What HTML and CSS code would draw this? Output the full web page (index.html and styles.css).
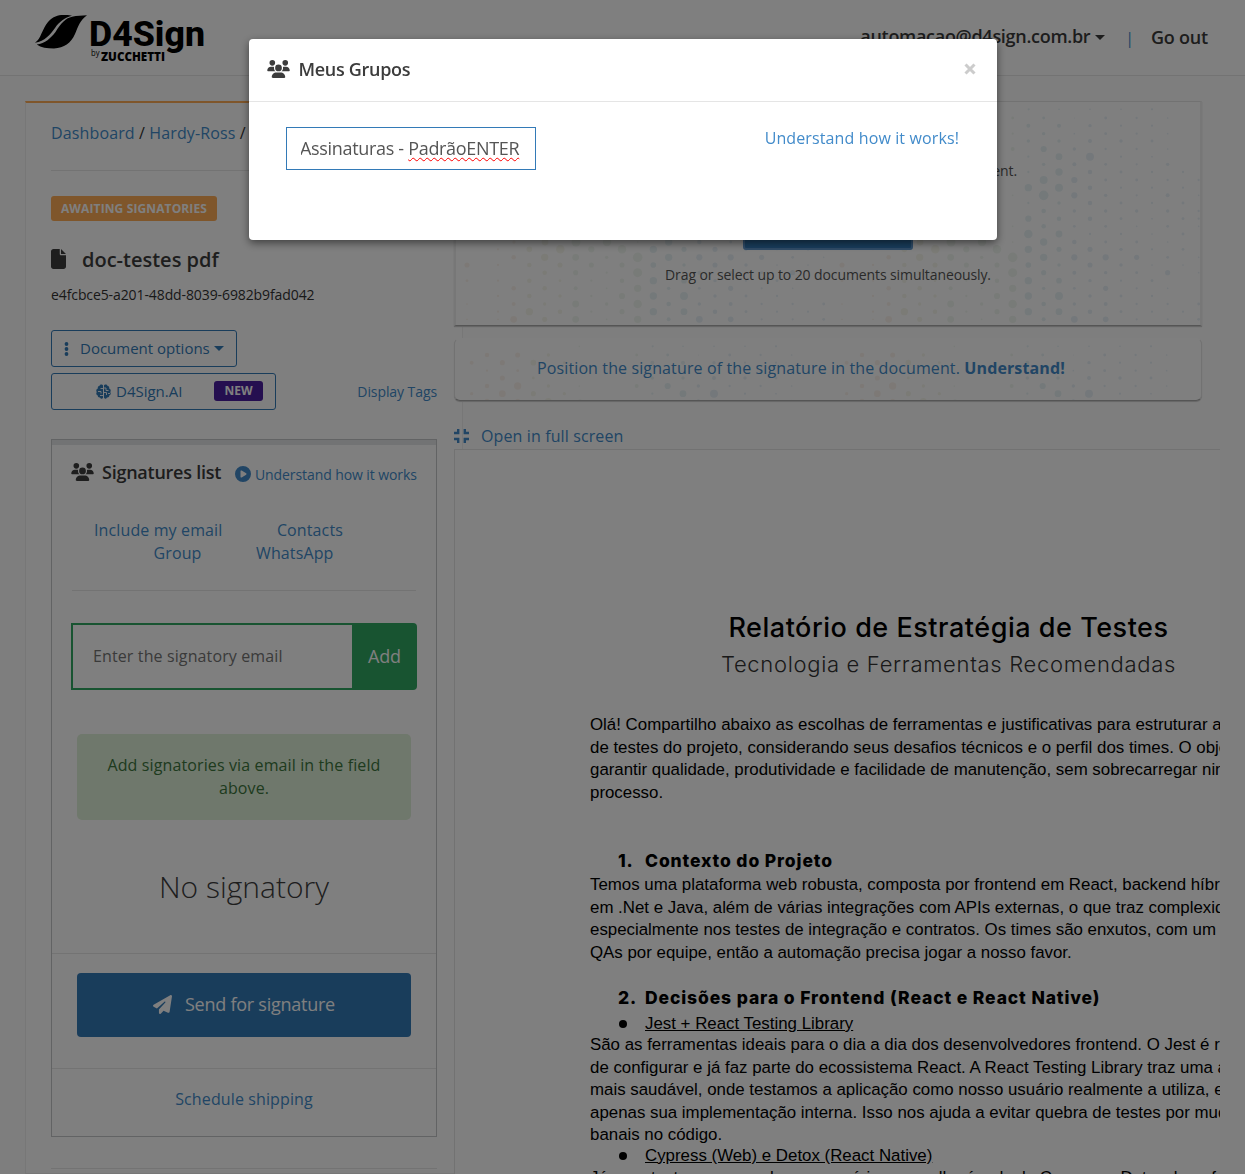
FILE: index.html
```html
<!DOCTYPE html>
<html lang="en">
<head>
<meta charset="utf-8">
<title>D4Sign</title>
<link rel="stylesheet" href="styles.css">
</head>
<body>
<svg class="defs" width="0" height="0">
  <symbol id="users" viewBox="0 0 640 512"><path d="M144 0a80 80 0 1 1 0 160A80 80 0 1 1 144 0zM512 0a80 80 0 1 1 0 160A80 80 0 1 1 512 0zM0 298.700C0 239.800 47.800 192 106.700 192h42.700c15.900 0 31 3.500 44.600 9.700c-1.300 7.200-1.900 14.700-1.900 22.300c0 38.200 16.800 72.500 43.300 96H21.300C9.600 320 0 310.400 0 298.700zM405.300 320c26.600-23.500 43.300-57.800 43.300-96c0-7.600-.7-15-1.900-22.300c13.600-6.300 28.700-9.700 44.600-9.700h42.700C592.200 192 640 239.800 640 298.700c0 11.800-9.600 21.300-21.300 21.300H405.300zM224 224a96 96 0 1 1 192 0 96 96 0 1 1 -192 0zM128 485.300C128 411.700 187.700 352 261.300 352H378.700C452.300 352 512 411.700 512 485.300c0 14.700-11.900 26.700-26.700 26.700H154.700c-14.700 0-26.700-11.900-26.700-26.700z"/></symbol>
</svg>

<header class="topbar">
  <svg class="logo" width="175" height="52" viewBox="0 0 175 52">
    <path d="M0 28.800C6 25 7 15 13 8C18 2.500 23 1 28 1C32 .8 35 1 37 1.700C30 3.500 24 8 20 14C15 21 10 27 0 28.800z"/>
    <path d="M1.700 30.500C10 29.500 16 24 20.500 18C26 9 31 4 37 2.800C42 1.500 47 1.500 52 1.200C45 6 43 13 40 20C36 29 29 34 19 34.500C12 34.500 6 33.500 1.700 30.500z"/>
    <text class="logo-name" x="54" y="31.500" textLength="116" lengthAdjust="spacingAndGlyphs">D4Sign</text>
    <text class="logo-by" x="56" y="42" textLength="8.500" lengthAdjust="spacingAndGlyphs">by</text>
    <text class="logo-sub" x="66" y="46.500" textLength="64" lengthAdjust="spacingAndGlyphs">ZUCCHETTI</text>
  </svg>
  <nav class="account">
    <span class="user">automacao@d4sign.com.br</span><span class="caret"></span>
    <span class="sep">|</span>
    <span class="out">Go out</span>
  </nav>
</header>

<div class="layout">
  <section class="side">
    <div class="crumbs"><a>Dashboard</a> / <a>Hardy-Ross</a> /</div>
    <div class="status">AWAITING SIGNATORIES</div>
    <h1 class="doc-name">
      <svg width="15" height="20" viewBox="0 0 384 512"><path d="M0 64C0 28.700 28.700 0 64 0H224V128c0 17.700 14.300 32 32 32H384V448c0 35.300-28.700 64-64 64H64c-35.300 0-64-28.700-64-64V64zm384 64H256V0L384 128z"/></svg>
      <span>doc-testes pdf</span>
    </h1>
    <div class="hash">e4fcbce5-a201-48dd-8039-6982b9fad042</div>
    <div class="btn-outline options">
      <svg width="5" height="14" viewBox="0 0 5 14"><circle cx="2.500" cy="2" r="1.900"/><circle cx="2.500" cy="7" r="1.900"/><circle cx="2.500" cy="12" r="1.900"/></svg>
      <span class="options-label">Document options</span><span class="caret"></span>
    </div>
    <div class="ai-row">
      <div class="btn-outline ai">
        <svg width="15" height="15" viewBox="0 0 15 15"><path d="M7 1.500C6.500 0 3.900 0 3.600 1.800C2 2 1.400 3.500 2 4.600C.2 5 -.2 7 .8 8C-.2 9.400.3 11 1.700 11.400C1.600 13 2.800 13.800 4 13.500C4.800 15.200 6.800 15 7 13.500zM8 1.500C8.500 0 11.100 0 11.400 1.800C13 2 13.600 3.500 13 4.600C14.800 5 15.200 7 14.200 8C15.200 9.400 14.700 11 13.300 11.400C13.400 13 12.200 13.800 11 13.500C10.200 15.200 8.200 15 8 13.500z"/><path class="folds" d="M7 4.500H4.500M2 7.500H5V9.500M4 11.500H7M8 4H10V6.500H12.500M8 8.500H10.500V11M12 9.500H14"/></svg>
        <span class="ai-label">D4Sign.AI</span>
        <span class="new">NEW</span>
      </div>
      <a class="tags">Display Tags</a>
    </div>

    <div class="panel">
      <div class="panel-head">
        <svg width="23" height="18"><use href="#users"/></svg>
        <span class="panel-title">Signatures list</span>
        <svg class="link-icon" width="16" height="16" viewBox="0 0 512 512"><path d="M0 256a256 256 0 1 1 512 0A256 256 0 1 1 0 256zM188.300 147.100c-7.600 4.200-12.300 12.300-12.300 20.900V344c0 8.700 4.700 16.700 12.300 20.900s16.800 4.100 24.300-.5l144-88c7.100-4.400 11.500-12.100 11.500-20.500s-4.400-16.100-11.500-20.500l-144-88c-7.400-4.500-16.700-4.700-24.300-.5z"/></svg>
        <a class="how">Understand how it works</a>
      </div>
      <div class="sources">
        <div class="source-row first"><a>Include my email</a><a>Contacts</a></div>
        <div class="source-row second"><a>Group</a><a>WhatsApp</a></div>
      </div>
      <div class="add-row"><div class="email">Enter the signatory email</div><div class="add">Add</div></div>
      <div class="notice">Add signatories via email in the field above.</div>
      <div class="empty">No signatory</div>
      <div class="send-wrap">
        <div class="send">
          <svg width="19" height="19" viewBox="0 0 512 512"><path d="M498.100 5.600c10.100 7 15.400 19.100 13.500 31.200l-64 416c-1.500 9.700-7.400 18.200-16 23s-18.900 5.400-28 1.600L284 427.700l-68.500 74.100c-8.900 9.700-22.900 12.900-35.200 8.100S160 493.200 160 480V396.400c0-4 1.500-7.800 4.200-10.700L331.800 202.800c5.800-6.300 5.600-16-.4-22s-15.700-6.400-22-.7L106 360.800 17.700 316.600C7.100 311.300 .3 300.700 0 288.900s5.900-22.800 16.100-28.700l448-256c10.700-6.100 23.900-5.500 34 1.400z"/></svg>
          <span>Send for signature</span>
        </div>
      </div>
      <div class="schedule"><a>Schedule shipping</a></div>
    </div>
    <div class="rule"></div>
  </section>

  <main class="content">
    <section class="upload">
      <svg class="dots" width="748" height="224"><defs><pattern id="dot-tile" width="375" height="300" patternUnits="userSpaceOnUse"></pattern></defs><rect width="748" height="224" fill="url(#dot-tile)"/></svg>
      <div class="upload-line">Send a new document.</div>
      <div class="upload-button"></div>
      <div class="upload-hint">Drag or select up to 20 documents simultaneously.</div>
    </section>
    <section class="position">
      <svg class="dots" width="748" height="62"><rect width="748" height="62" fill="url(#dot-tile)"/></svg>
      <a>Position the signature of the signature in the document. <b>Understand!</b></a>
    </section>
    <div class="fullscreen">
      <svg width="15" height="14" viewBox="0 0 15 14"><path d="M0 4H4.200V0M10.800 0V4H15M0 10H4.200V14M10.800 14V10H15"/></svg>
      <a>Open in full screen</a>
    </div>
    <article class="viewer">
      <h2 class="d-title">Relatório de Estratégia de Testes</h2>
      <h3 class="d-subtitle">Tecnologia e Ferramentas Recomendadas</h3>
      <p class="intro">Olá! Compartilho abaixo as escolhas de ferramentas e justificativas para estruturar a<br>de testes do projeto, considerando seus desafios técnicos e o perfil dos times. O obje<br>garantir qualidade, produtividade e facilidade de manutenção, sem sobrecarregar nin<br>processo.</p>
      <h4 class="h-context"><span class="num">1.</span>Contexto do Projeto</h4>
      <p class="context">Temos uma plataforma web robusta, composta por frontend em React, backend híbri<br>em .Net e Java, além de várias integrações com APIs externas, o que traz complexid<br>especialmente nos testes de integração e contratos. Os times são enxutos, com um<br>QAs por equipe, então a automação precisa jogar a nosso favor.</p>
      <h4 class="h-front"><span class="num">2.</span>Decisões para o Frontend (React e React Native)</h4>
      <div class="item"><span class="bullet"></span><u>Jest + React Testing Library</u></div>
      <p class="jest">São as ferramentas ideais para o dia a dia dos desenvolvedores frontend. O Jest é rá<br>de configurar e já faz parte do ecossistema React. A React Testing Library traz uma a<br>mais saudável, onde testamos a aplicação como nosso usuário realmente a utiliza, e<br>apenas sua implementação interna. Isso nos ajuda a evitar quebra de testes por mud<br>banais no código.</p>
      <div class="item second-item"><span class="bullet"></span><u>Cypress (Web) e Detox (React Native)</u></div>
      <p class="last">Já para testes que envolvem o usuário, a escolha é a dupla Cypress e Detox, bem f</p>
    </article>
  </main>
</div>

<div class="backdrop"></div>
<div class="modal">
  <div class="modal-head">
    <svg width="23" height="18"><use href="#users"/></svg>
    <span class="modal-title">Meus Grupos</span>
    <svg class="close" width="12" height="12" viewBox="0 0 12 12"><path d="M1.500 1.500L10.500 10.500M10.500 1.500L1.500 10.500"/></svg>
  </div>
  <div class="modal-body">
    <div class="group-input"><div class="group-text">Assinaturas - <span class="misspelt">PadrãoENTER</span></div></div>
    <a class="modal-how">Understand how it works!</a>
  </div>
</div>
<script src="dots.js"></script>
</body>
</html>
```
FILE: styles.css
```css
* { box-sizing: border-box; }
body { margin: 0; height: 1174px; overflow: hidden; background: #fdfdfd; color: #3c3c3c; font: 16px/23px "Open Sans", sans-serif; letter-spacing: .12px; }
a { color: #428bca; }
h1, h2, h3, h4, p { margin: 0; }
svg { display: block; flex: none; }
.defs { position: absolute; }

.topbar { height: 76px; display: flex; justify-content: space-between; background: #fff; border-bottom: 1px solid #e7e7e7; padding: 14px 37px 0 35px; }
.logo { fill: #000; letter-spacing: 0; }
.logo-name { font: 800 35px Roboto, sans-serif; }
.logo-by { font: 400 9.500px "Open Sans", sans-serif; }
.logo-sub { font: 800 12.500px "Open Sans", sans-serif; }
.account { display: flex; align-items: center; height: 46px; font-size: 18px; font-weight: 600; letter-spacing: -.2px; color: #3a3a3a; white-space: nowrap; }
.user { padding-bottom: 1px; letter-spacing: -.29px; }
.caret { border: 5px solid transparent; border-top-color: currentColor; border-bottom: 0; margin-left: 5px; }
.sep { color: #428bca; margin: 2px 17px 0 20px; font-weight: 400; font-size: 16px; }

.layout { display: flex; padding: 25px 25px 0; }
.side { flex: none; width: 438px; height: 1073px; background: #fff; border: 1px solid #eee; border-top: 2px solid #ffac56; padding: 0 25px; }
.crumbs { height: 68px; padding-top: 19px; border-bottom: 1px solid #e7e7e7; color: #333; letter-spacing: .13px; }
.status { width: 166px; height: 25px; margin-top: 25px; border-radius: 3px; background: #ffac56; color: #fff; font-size: 12px; font-weight: 700; line-height: 25px; text-align: center; white-space: nowrap; }
.doc-name { display: flex; align-items: center; gap: 16px; height: 30px; margin-top: 23px; font-size: 20px; font-weight: 600; letter-spacing: 0; fill: #3c3c3c; white-space: nowrap; }
.hash { margin-top: 9px; font-size: 14px; letter-spacing: -.1px; color: #333; white-space: nowrap; }
.btn-outline { height: 37px; border: 1px solid #337ab7; border-radius: 3px; color: #337ab7; fill: #337ab7; display: flex; align-items: center; font-size: 15px; letter-spacing: 0; white-space: nowrap; }
.options { width: 186px; margin-top: 24px; padding-left: 12px; }
.options-label { margin-left: 11px; }
.options .caret { margin-left: 4px; }
.ai-row { display: flex; align-items: center; justify-content: space-between; margin-top: 6px; }
.ai { width: 225px; padding-left: 44px; }
.ai-label { margin-left: 5px; width: 98px; }
.folds { fill: none; stroke: #fff; stroke-width: .9; }
.new { width: 49px; height: 20px; border-radius: 3px; background: #4a1ea0; color: #fff; font-size: 12px; font-weight: 700; line-height: 19px; text-align: center; margin-bottom: 2px; }
.tags { font-size: 14px; letter-spacing: -.08px; }

.panel { height: 698px; margin-top: 29px; border: 1px solid #c4c6c8; background: #fff; }
.panel-head { display: flex; align-items: center; height: 61px; border-top: 5px solid #e5e6e9; padding: 0 19px 2px; white-space: nowrap; }
.panel-title { margin: 0 0 0 8px; width: 133px; font-size: 18px; font-weight: 600; letter-spacing: -.25px; color: #3a3a3a; }
.panel-head svg { fill: #3c3c3c; }
.panel-head .link-icon { fill: #428bca; margin-top: 3px; }
.how { font-size: 14px; letter-spacing: -.09px; margin: 4px 0 0 4px; }
.sources { height: 90px; margin: 0 20px; padding-top: 18px; border-bottom: 1px solid #e7e7e7; }
.source-row { display: flex; gap: 54.500px; }
.first { padding-left: 22px; }
.second { padding-left: 81.500px; }
.add-row { display: flex; height: 67px; margin: 32px 19px 0; }
.email { flex: 1; border: 2px solid #30a862; border-right: 0; padding-left: 20px; line-height: 62px; color: #757575; }
.add { width: 65px; background: #30a862; color: #fff; border-radius: 0 4px 4px 0; line-height: 66px; font-size: 18px; letter-spacing: -.2px; text-align: center; }
.notice { height: 86px; margin: 44px 25px 0; padding: 20px 28px; border-radius: 5px; background: #dff0d8; color: #3c763d; text-align: center; }
.empty { height: 134px; border-bottom: 1px solid #e7e7e7; text-align: center; font-size: 30px; font-weight: 300; line-height: 133px; letter-spacing: 0; }
.send-wrap { height: 115px; padding: 19px 25px 0; border-bottom: 1px solid #e7e7e7; }
.send { display: flex; align-items: center; justify-content: center; gap: 13px; height: 64px; padding-bottom: 2px; border-radius: 4px; background: #337ab7; color: #fff; fill: #fff; font-size: 18px; letter-spacing: -.25px; }
.schedule { padding-top: 19px; text-align: center; }
.rule { margin-top: 31px; border-top: 1px solid #e7e7e7; }

.content { width: 766px; margin-left: -9px; flex: none; }
.upload, .position { position: relative; width: 748px; background: #fff; overflow: hidden; border: 1px solid #e4e4e4; border-bottom: 1px solid #aaa; }
.upload { height: 225px; border-left: 2px solid #efefef; border-right: 2px solid #efefef; box-shadow: 0 1px 1px #ccc; color: #555; font-size: 14px; letter-spacing: -.1px; }
.dots { position: absolute; left: 0; top: 0; }
.upload-line { position: relative; width: 378px; margin: 57px auto 0; text-align: right; }
.upload-button { position: relative; width: 170px; height: 47px; margin: 21px auto 0; background: #337ab7; border: 2px solid #5f97cd; border-radius: 3px; }
.upload-hint { position: relative; margin-top: 13px; text-align: center; }
.position { height: 63px; margin-top: 12px; padding: 18px 0 0 82px; border-color: #fff #e4e4e4 #aaa #e4e4e4; border-radius: 6px; box-shadow: 0 1px 1px #ccc; white-space: nowrap; }
.position a { position: relative; }
.fullscreen { display: flex; align-items: center; gap: 12px; height: 48px; padding-top: 22px; }
.fullscreen svg { fill: none; stroke: #428bca; stroke-width: 2.400; }

.viewer { height: 730px; overflow: hidden; border: 1px solid #e4e4e4; border-right: 0; background: #fff; color: #000; padding: 159px 0 0 135px; font: 16.860px/22.500px "Liberation Sans", Arial, sans-serif; letter-spacing: 0; white-space: nowrap; }
.viewer h2, .viewer h3 { width: 717px; text-align: center; font-family: Inter, sans-serif; }
.d-title { font-size: 27px; line-height: 38px; font-weight: 450; letter-spacing: .53px; }
.d-subtitle { font-size: 22px; line-height: 35px; font-weight: 350; letter-spacing: .68px; color: #333; }
.intro { margin-top: 32px; }
.viewer h4 { font: 800 17.500px/24px Inter, sans-serif; letter-spacing: .88px; padding-left: 28px; display: flex; }
.num { width: 27px; }
.h-context { margin-top: 45px; }
.context { margin-top: 1px; }
.h-front { margin-top: 22px; }
.item { display: flex; align-items: center; padding-left: 29px; height: 22px; margin-top: 3px; }
.second-item { height: 21px; margin-top: -1px; }
.bullet { width: 8px; height: 8px; border-radius: 50%; background: #000; margin-right: 18px; }
.jest { margin-top: -1px; }

.backdrop { position: fixed; inset: 0; background: rgba(0, 0, 0, .5); }
.modal { position: fixed; left: 249px; top: 39px; width: 748px; height: 201px; background: #fff; border-radius: 4px; box-shadow: 0 3px 9px rgba(0, 0, 0, .5); }
.modal-head { display: flex; align-items: center; height: 63px; padding: 0 21px 2px 18px; border-bottom: 1px solid #e5e5e5; fill: #3c3c3c; }
.modal-title { margin-left: 8.500px; font-size: 18px; font-weight: 600; letter-spacing: -.3px; }
.close { margin-left: auto; stroke: #ccc; stroke-width: 3; }
.modal-body { display: flex; justify-content: space-between; padding: 25px 38px 0 37px; }
.group-input { width: 250px; height: 43px; border: 1px solid #337ab7; padding: 0 14px; }
.group-text { overflow: hidden; height: 41px; line-height: 41px; font-size: 18px; letter-spacing: -.32px; text-indent: -1px; color: #555; white-space: pre; }
.misspelt { text-decoration: underline wavy red 1px; text-underline-offset: 2px; text-decoration-skip-ink: none; }
```
FILE: dots.js
```js
// Halftone tile: each row is y followed by x:radius pairs, in tile pixels times three.
const rows = [
  "22 373:3 593:4 684:3 777:3 870:3 963:4",
  "48 96:8 188:9 280:6 545:5 638:5 730:2 824:5 917:4 1010:3",
  "71 50:7 142:9 235:10 328:5 592:7 684:7 777:6 870:4 963:4",
  "95 96:4 188:5 545:4 638:6 730:3 824:5 917:4 1010:3",
  "117 142:9 235:5 592:6 684:6 777:7 870:6 963:5",
  "141 96:8 188:13 280:6 373:3 545:7 638:11 730:6 824:4 917:4 1010:3",
  "164 50:6 142:12 235:9 328:6 592:4 684:12 777:14 870:4 963:3",
  "187 96:9 188:9 280:12 375:7 638:6 730:7 824:5 917:4 1010:6",
  "210 592:4 684:13 777:8 870:5 963:4 1056:4",
  "234 638:14 730:11 824:5 917:5 1010:4 1103:4",
  "257 592:13 684:14 777:8 870:4 963:4 1056:4",
  "280 545:3 638:17 730:11 824:6 917:4 1010:7 1103:3",
  "303 592:4 684:6 777:8 870:5 963:4 1056:5",
  "327 638:8 730:6 824:6 917:6 1010:6 1103:4",
  "350 592:11 684:8 777:8 870:5 963:3 1056:5 1103:4",
  "373 545:3 638:8 730:5 824:5 917:3 1010:5 1103:3",
  "396 592:15 684:12 777:4 870:4 963:3 1056:5",
  "420 174:6 267:12 360:16 453:15 545:3 638:13 730:8 824:5 917:5 1010:3",
  "442 126:4 220:10 313:15 406:11 498:15 592:13 684:9 777:9 870:6 963:4 1056:5",
  "466 173:8 266:13 359:12 452:6 545:17 638:13 730:11 824:11 917:9 1010:5 1103:3",
  "489 33:9 126:4 220:8 312:9 406:9 498:9 592:10 684:6 777:9 870:6 963:3 1056:3",
  "512 266:8 359:9 452:4 545:16 638:9 730:7 824:6 917:5 1010:9 1103:3",
  "536 33:5 126:4 220:8 312:5 406:4 498:8 592:13 684:10 777:6 870:4 963:5",
  "559 173:8 266:8 359:7 452:3 545:13 638:6 730:5 824:9 917:4 1010:3",
  "582 126:4 220:8 312:6 406:4 498:11 592:13 684:14 777:6 870:5 963:4",
  "606 33:3 173:7 266:6 359:12 452:6 545:15 638:8 730:6 824:7 917:4 1010:4 1103:5",
  "629 126:4 220:13 312:8 406:4 498:9 592:13 684:12 777:8 870:5 963:4 1056:4",
  "652 33:3 126:3 173:12 266:9 359:12 452:3 545:13 638:7 730:12 824:10 917:4 1010:4 1103:5"
];
const stops = [[200, "#d9a06c"], [330, "#b9b56d"], [560, "#8fb887"], [720, "#62a7b8"], [1130, "#6297c3"]];
const tile = document.getElementById("dot-tile");
for (const row of rows) {
  const [y, ...dots] = row.split(" ");
  for (const dot of dots) {
    const [x, r] = dot.split(":").map(Number);
    const c = document.createElementNS("http://www.w3.org/2000/svg", "circle");
    c.setAttribute("cx", x / 3);
    c.setAttribute("cy", y / 3);
    c.setAttribute("r", r / 3 * .85);
    c.setAttribute("fill", stops.find(s => x <= s[0])[1]);
    c.setAttribute("opacity", x < 560 ? .12 : .15);
    tile.appendChild(c);
  }
}
```
